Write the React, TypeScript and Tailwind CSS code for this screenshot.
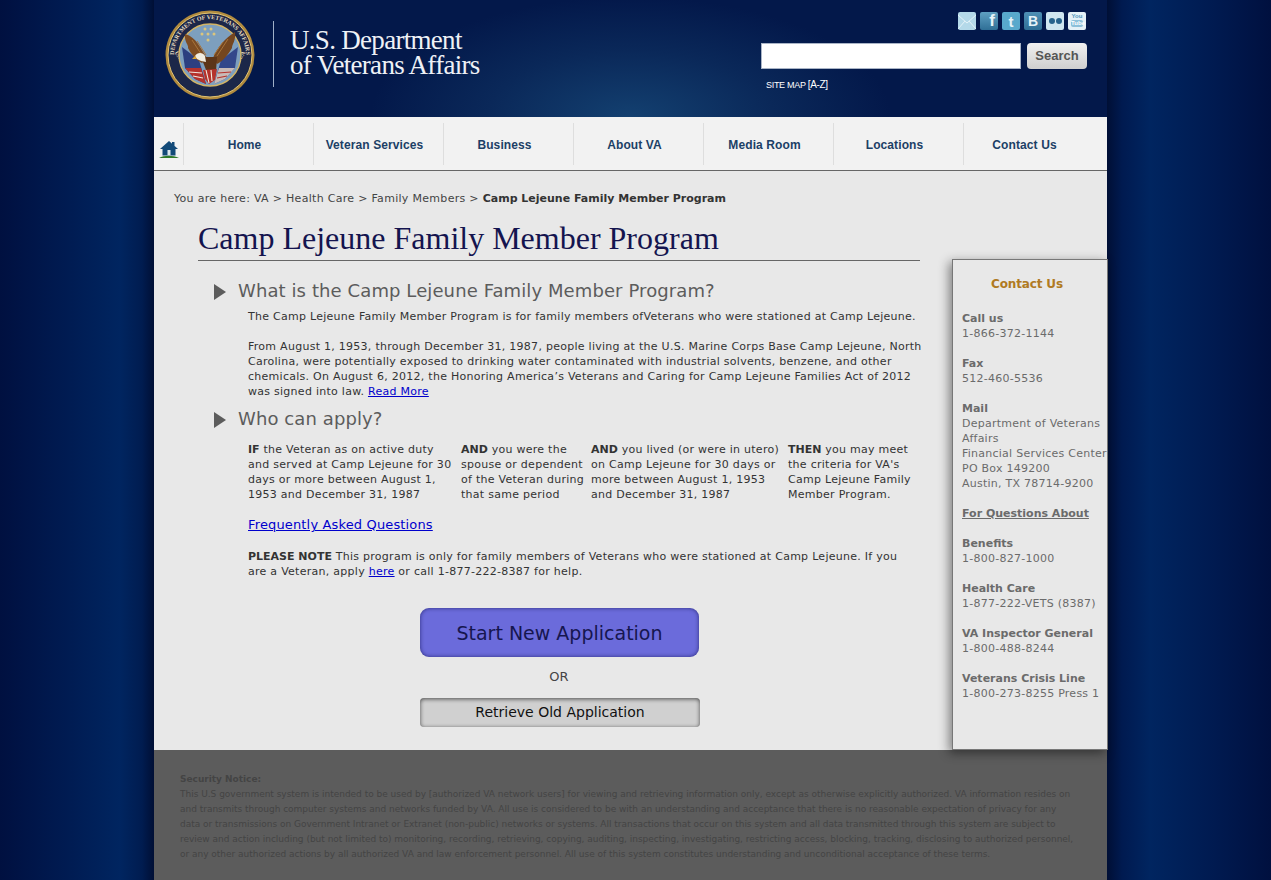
import React from 'react';

const navItems = ['Home', 'Veteran Services', 'Business', 'About VA', 'Media Room', 'Locations', 'Contact Us'];

const contactBlocks = [
  { label: 'Call us', lines: ['1-866-372-1144'] },
  { label: 'Fax', lines: ['512-460-5536'] },
  {
    label: 'Mail',
    lines: ['Department of Veterans', 'Affairs', 'Financial Services Center', 'PO Box 149200', 'Austin, TX 78714-9200'],
  },
];

const questionBlocks = [
  { label: 'Benefits', lines: ['1-800-827-1000'] },
  { label: 'Health Care', lines: ['1-877-222-VETS (8387)'] },
  { label: 'VA Inspector General', lines: ['1-800-488-8244'] },
  { label: 'Veterans Crisis Line', lines: ['1-800-273-8255 Press 1'] },
];

const noticeLines = [
  'This U.S government system is intended to be used by [authorized VA network users] for viewing and retrieving information only, except as otherwise explicitly authorized. VA information resides on',
  'and transmits through computer systems and networks funded by VA. All use is considered to be with an understanding and acceptance that there is no reasonable expectation of privacy for any',
  'data or transmissions on Government Intranet or Extranet (non-public) networks or systems. All transactions that occur on this system and all data transmitted through this system are subject to',
  'review and action including (but not limited to) monitoring, recording, retrieving, copying, auditing, inspecting, investigating, restricting access, blocking, tracking, disclosing to authorized personnel,',
  'or any other authorized actions by all authorized VA and law enforcement personnel. All use of this system constitutes understanding and unconditional acceptance of these terms.',
];

const Seal = () => (
  <svg width="90" height="90" viewBox="0 0 90 90" className="shrink-0">
    <defs>
      <path id="sealTop" d="M10.2 54.3 A36 36 0 1 1 79.8 54.3" />
      <path id="sealBottom" d="M6.4 34.6 A40 40 0 0 0 83.6 34.6" />
    </defs>
    <circle cx="45" cy="45" r="44.5" fill="#b08a3e" />
    <circle cx="45" cy="45" r="42" fill="#1c2749" stroke="#e0c272" strokeWidth="1" />
    <text fontFamily="'Liberation Serif', serif" fontSize="6" fontWeight="700" fill="#e6dcc0">
      <textPath href="#sealTop" startOffset="50%" textAnchor="middle">DEPARTMENT OF VETERANS AFFAIRS</textPath>
    </text>
    <text fontFamily="'Liberation Serif', serif" fontSize="6" fontWeight="700" fill="#e6dcc0">
      <textPath href="#sealBottom" startOffset="50%" textAnchor="middle">UNITED STATES OF AMERICA</textPath>
    </text>
    <circle cx="45" cy="45" r="31" fill="#7d9fbe" stroke="#d4b565" strokeWidth="1.4" />
    {/* flags */}
    <path d="M17 37 L34 50 L41 74 L30 69 L20 58 Z" fill="#2c3f80" />
    <path d="M73 37 L56 50 L49 74 L60 69 L70 58 Z" fill="#33478a" />
    <path d="M20 58 L36 58 L41 74 L30 69 Z" fill="#b5322c" />
    <path d="M24 62 L37 63 M28 66 L38 68" stroke="#efe7df" strokeWidth="1.2" />
    <path d="M70 58 L54 58 L49 74 L60 69 Z" fill="#c8bab6" />
    <path d="M66 62 L53 63 M62 66 L52 68" stroke="#b5322c" strokeWidth="1.2" />
    {/* eagle */}
    <path d="M42 48 C36 40 32 27 20 24 C19 32 24 35 23 38 C26 44 31 50 37 53 Z" fill="#7d4c22" />
    <path d="M48 48 C52 38 60 28 70 22 C71 31 67 34 67 38 C63 45 58 51 52 54 Z" fill="#74461f" />
    <path d="M27 30 L38 47 M32 31 L41 45 M63 29 L52 46 M58 32 L49 45" stroke="#a8743a" strokeWidth="1" />
    <path d="M36 47 L52 47 L51 62 L43 65 Z" fill="#5c3518" />
    <path d="M30 46 C32 42 38 42 40 46 L41 52 L36 51 L32 49 Z" fill="#f1ede0" />
    <path d="M30 46 L27 49 L32 49 Z" fill="#d9a53a" />
    <path d="M38 60 L52 59 L50 70 L44 74 L40 69 Z" fill="#b5322c" />
    <path d="M41 60 L44 73 M46 60 L47 71" stroke="#f1ede0" strokeWidth="1.1" />
    <g fill="#dcc67c">
      <circle cx="40" cy="19" r="1.5" />
      <circle cx="46" cy="19" r="1.5" />
      <circle cx="37" cy="24" r="1.5" />
      <circle cx="43" cy="24" r="1.5" />
      <circle cx="49" cy="24" r="1.5" />
      <circle cx="43" cy="30" r="1.5" />
    </g>
  </svg>
);

const SocialIcons = () => (
  <div className="flex justify-end gap-1 pr-[21px]">
    <svg width="18" height="18" viewBox="0 0 18 18">
      <rect width="18" height="18" rx="2" fill="#b4d9e9" />
      <path d="M0 3 L9 11 L18 3 M0 17 L7 9 M18 17 L11 9" stroke="#e4f2f8" strokeWidth="1" fill="none" />
    </svg>
    <div className="flex h-[18px] w-[18px] items-end justify-end rounded-[2px] bg-[linear-gradient(#5fa0c2,#2f6f96)] pr-[3px] font-['Liberation_Sans',sans-serif] text-[17px] leading-[18px] font-bold text-[#e6f3f8]">
      f
    </div>
    <div className="flex h-[18px] w-[18px] items-center justify-center rounded-[2px] bg-[#58a9cc] font-['Liberation_Sans',sans-serif] text-[15px] leading-none font-bold text-[#e6f3f8]">
      t
    </div>
    <div className="flex h-[18px] w-[18px] items-center justify-center rounded-[2px] bg-[linear-gradient(#4f90b5,#2f6f96)] font-['Liberation_Sans',sans-serif] text-[14px] leading-none font-bold text-[#e6f3f8]">
      B
    </div>
    <div className="flex h-[18px] w-[18px] items-center justify-center gap-px rounded-[2px] bg-[#cfe6f0]">
      <span className="h-[6px] w-[6px] rounded-full bg-[#27638c]" />
      <span className="h-[6px] w-[6px] rounded-full bg-[#27638c]" />
    </div>
    <div className="flex h-[18px] w-[18px] flex-col items-center rounded-[2px] bg-[#e4f1f7] pt-px font-['Liberation_Sans',sans-serif] text-[6px] leading-[7px] font-bold text-[#4f94bb]">
      <span>You</span>
      <span className="w-[12px] rounded-[2px] bg-[#8cc0da] text-center text-white">Tube</span>
    </div>
  </div>
);

const HomeIcon = () => (
  <svg width="20" height="18" viewBox="0 0 20 18">
    <path d="M10 0 L19 8 H16.5 V14.5 H3.5 V8 H1 Z M13 1 H15.5 V5 L13 3 Z" fill="#124a78" />
    <rect x="8.5" y="9" width="3" height="5.5" fill="#dce8ee" />
    <path d="M0 17 C5 14 14 14 20 17 Z" fill="#2f7a2a" />
  </svg>
);

const Arrow = () => (
  <svg width="12" height="16" viewBox="0 0 12 16" className="mt-[5px] shrink-0">
    <path d="M0 0 L12 8 L0 16 Z" fill="#5c5c5c" />
  </svg>
);

const ContactBlock = ({ label, lines }: { label: string; lines: string[] }) => (
  <div className="mb-[15px]">
    <div className="font-bold tracking-normal">{label}</div>
    {lines.map((line) => (
      <div key={line} className="whitespace-nowrap">{line}</div>
    ))}
  </div>
);

export default function App() {
  return (
    <div className="h-[880px] overflow-hidden bg-[linear-gradient(90deg,#001040_0px,#001a50_60px,#002560_120px,#001c50_142px,#000f35_154px,#000f35_1107px,#001a50_1122px,#002560_1150px,#001a50_1215px,#00103f_1271px)] font-['DejaVu_Sans',sans-serif]">
      <div className="ml-[154px] w-[953px]">
        {/* Header */}
        <div className="flex h-[117px] justify-between bg-[radial-gradient(ellipse_260px_120px_at_50%_100%,#134070,#0a2859_55%,#03184a_100%)]">
          <div className="flex items-start pt-[10px] pl-[11px]">
            <Seal />
            <div className="mt-[11px] ml-[18px] h-[66px] w-px bg-[#9fb0c8]" />
            <div className="mt-[18px] ml-[16px] font-['Liberation_Serif',serif] text-[27px] leading-[25px] tracking-[-0.7px] text-[#eef1f6]">
              <div>U.S. Department</div>
              <div>of Veterans Affairs</div>
            </div>
          </div>
          <div className="w-[346px] pt-[12px]">
            <SocialIcons />
            <div className="mt-[13px] flex gap-[6px]">
              <input className="h-[26px] w-[260px] border border-[#a9b4c6] bg-white" />
              <button className="h-[26px] w-[60px] rounded-[4px] bg-[linear-gradient(#f0f0f0,#cfcfcf)] font-['Liberation_Sans',sans-serif] text-[13px] font-bold text-[#555555]">
                Search
              </button>
            </div>
            <div className="mt-[10px] pl-[5px] font-['Liberation_Sans',sans-serif] text-[9px] leading-[12px] tracking-[-0.3px] text-white">
              SITE MAP <span className="text-[10px]">[A-Z]</span>
            </div>
          </div>
        </div>

        {/* Nav */}
        <div className="flex h-[54px] items-center border-b border-[#666666] bg-[#f2f2f2]">
          <div className="flex h-[42px] w-[29px] items-end justify-end pr-[4px] pb-[6px]">
            <HomeIcon />
          </div>
          {navItems.map((item) => (
            <div
              key={item}
              className="flex h-[42px] w-[130px] items-center justify-center border-l border-[#dedede] pt-[2px] pr-[8px] font-['Liberation_Sans',sans-serif] text-[12px] font-bold tracking-[0.1px] text-[#1c3f66]"
            >
              {item}
            </div>
          ))}
        </div>

        {/* Content */}
        <div className="flex h-[579px] bg-[#e8e8e8]">
          <div className="w-[798px] shrink-0 pt-[20px] pl-[20px] text-[11px] leading-[15px] tracking-[0.3px] text-[#333333]">
            <div className="text-[#444444]">
              You are here: VA &gt; Health Care &gt; Family Members &gt;{' '}
              <span className="font-bold tracking-normal text-[#333333]">Camp Lejeune Family Member Program</span>
            </div>

            <div className="mt-[11px] ml-[24px] w-[722px] border-b border-[#666666] font-['Liberation_Serif',serif] text-[32px] leading-[43px] tracking-normal text-[#14144f]">
              Camp Lejeune Family Member Program
            </div>

            <div className="mt-[18px] ml-[40px] flex gap-[12px]">
              <Arrow />
              <div className="text-[18px] leading-[24px] tracking-[0.1px] text-[#5c5c5c]">What is the Camp Lejeune Family Member Program?</div>
            </div>
            <div className="mt-[6px] ml-[74px] w-[680px] tracking-[0.27px]">
              <p>The Camp Lejeune Family Member Program is for family members ofVeterans who were stationed at Camp Lejeune.</p>
              <p className="mt-[15px]">
                From August 1, 1953, through December 31, 1987, people living at the U.S. Marine Corps Base Camp Lejeune, North
                <br />
                Carolina, were potentially exposed to drinking water contaminated with industrial solvents, benzene, and other
                <br />
                chemicals. On August 6, 2012, the Honoring America’s Veterans and Caring for Camp Lejeune Families Act of 2012
                <br />
                was signed into law. <a className="text-[#0000cc] underline">Read More</a>
              </p>
            </div>

            <div className="mt-[8px] ml-[40px] flex gap-[12px]">
              <Arrow />
              <div className="text-[18px] leading-[24px] tracking-[0.1px] text-[#5c5c5c]">Who can apply?</div>
            </div>
            <div className="mt-[11px] ml-[74px] flex tracking-[0.27px]">
              <div className="w-[213px] pr-[6px]">
                <b className="tracking-normal">IF</b> the Veteran as on active duty and served at Camp Lejeune for 30 days or more between August 1, 1953 and December 31, 1987
              </div>
              <div className="w-[130px] pr-[4px]">
                <b className="tracking-normal">AND</b> you were the spouse or dependent of the Veteran during that same period
              </div>
              <div className="w-[197px] pr-[4px]">
                <b className="tracking-normal">AND</b> you lived (or were in utero) on Camp Lejeune for 30 days or more between August 1, 1953 and December 31, 1987
              </div>
              <div className="w-[130px]">
                <b className="tracking-normal">THEN</b> you may meet the criteria for VA's Camp Lejeune Family Member Program.
              </div>
            </div>

            <a className="mt-[15px] ml-[74px] block text-[13px] leading-[16px] tracking-[0.15px] text-[#0000cc] underline">Frequently Asked Questions</a>

            <p className="mt-[16px] ml-[74px] w-[680px] tracking-[0.27px]">
              <b className="tracking-normal">PLEASE NOTE</b> This program is only for family members of Veterans who were stationed at Camp Lejeune. If you
              <br />
              are a Veteran, apply <a className="text-[#0000cc] underline">here</a> or call 1-877-222-8387 for help.
            </p>

            <div className="mt-[29px] ml-[246px] flex w-[280px] flex-col items-start">
              <button className="h-[49px] w-[279px] rounded-[9px] bg-[#6b6bdb] pt-[2px] text-[19px] tracking-normal text-[#16164f] shadow-[inset_0_0_4px_rgba(0,0,60,0.6)]">
                Start New Application
              </button>
              <div className="mt-[12px] w-[278px] text-center text-[13px] leading-[16px] tracking-normal text-[#444444]">OR</div>
              <button className="mt-[13px] h-[29px] w-[280px] rounded-[4px] bg-[#d0d0d0] text-[14px] tracking-normal text-[#111111] shadow-[inset_0_1px_4px_rgba(0,0,0,0.65)]">
                Retrieve Old Application
              </button>
            </div>
          </div>

          <aside className="mt-[88px] h-[491px] w-[156px] shrink-0 border border-[#777777] bg-[#e8e8e8] pt-[17px] pl-[9px] text-[11px] leading-[15px] tracking-[0.25px] text-[#6b6b6b] shadow-[-3px_3px_10px_rgba(0,0,0,0.45)]">
            <div className="mb-[19px] pr-[15px] text-center text-[12px] font-bold tracking-[-0.15px] text-[#b07a22]">Contact Us</div>
            {contactBlocks.map((block) => (
              <ContactBlock key={block.label} {...block} />
            ))}
            <div className="mb-[15px] font-bold tracking-normal underline">For Questions About</div>
            {questionBlocks.map((block) => (
              <ContactBlock key={block.label} {...block} />
            ))}
          </aside>
        </div>

        {/* Security notice */}
        <div className="h-[130px] bg-[#5c5c5c] px-[26px] pt-[22px] text-[9px] leading-[15px] tracking-[-0.015px] text-[#444444]">
          <div className="font-bold">Security Notice:</div>
          {noticeLines.map((line) => (
            <div key={line} className="whitespace-nowrap">{line}</div>
          ))}
        </div>
      </div>
    </div>
  );
}
